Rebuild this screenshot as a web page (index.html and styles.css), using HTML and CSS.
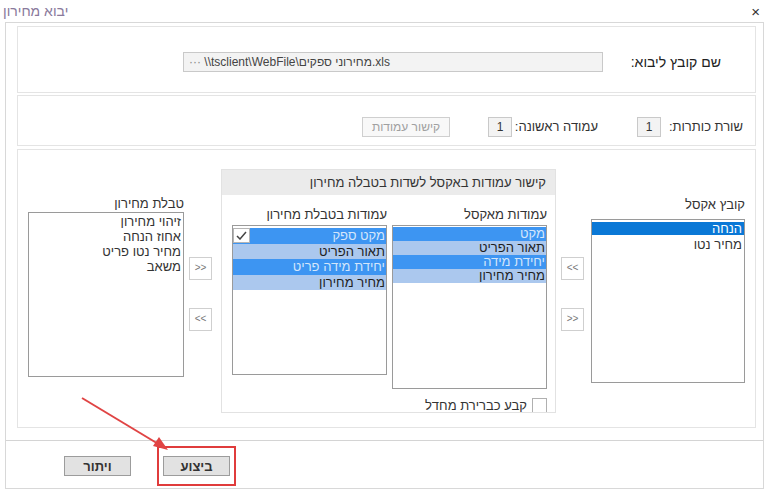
FILE: index.html
```html
<!DOCTYPE html>
<html lang="he" dir="rtl">

<head>
    <meta charset="UTF-8">
    <title>יבוא מחירון</title>
    <link rel="stylesheet" href="styles.css">
</head>

<body>
    <div class="titlebar">
        <span class="title">יבוא מחירון</span>
        <span class="close">×</span>
    </div>

    <div class="dialog">
        <div class="sections">

            <div class="box file-row">
                <div class="file-label">שם קובץ ליבוא:</div>
                <div class="file-input"><span class="dots">···</span> <bdi dir="ltr">\\tsclient\WebFile\מחירוני ספקים.xls</bdi></div>
            </div>

            <div class="box settings-row">
                <div class="lbl lbl-head">שורת כותרות:</div>
                <div class="num">1</div>
                <div class="lbl lbl-col">עמודה ראשונה:</div>
                <div class="num">1</div>
                <button class="link-btn" disabled>קישור עמודות</button>
            </div>

            <div class="box mapping">
                <!-- excel file columns -->
                <div class="col col-excel">
                    <div class="col-title">קובץ אקסל</div>
                    <div class="list list-excel">
                        <div class="item sel">הנחה</div>
                        <div class="item">מחיר נטו</div>
                    </div>
                </div>

                <div class="arrows arrows-right">
                    <div class="arr">&lt;&lt;</div>
                    <div class="arr">&gt;&gt;</div>
                </div>

                <!-- link panel -->
                <div class="panel">
                    <div class="panel-head">קישור עמודות באקסל לשדות בטבלה מחירון</div>
                    <div class="panel-body">
                        <div class="pcol">
                            <div class="pcol-title">עמודות מאקסל</div>
                            <div class="list list-xl">
                                <div class="row on">מקט</div>
                                <div class="row off">תאור הפריט</div>
                                <div class="row on">יחידת מידה</div>
                                <div class="row off">מחיר מחירון</div>
                            </div>
                            <div class="default-row">
                                <span class="chk"></span>
                                <span>קבע כברירת מחדל</span>
                            </div>
                        </div>
                        <div class="pcol">
                            <div class="pcol-title">עמודות בטבלת מחירון</div>
                            <div class="list list-tbl">
                                <div class="row on">מקט ספק
                                    <span class="tick">
                                        <svg width="11" height="9" viewBox="0 0 11 9"><polyline points="1,5 4,8 10,1" fill="none" stroke="#444" stroke-width="1.5"/></svg>
                                    </span>
                                </div>
                                <div class="row off">תאור הפריט</div>
                                <div class="row on">יחידת מידה פריט</div>
                                <div class="row off">מחיר מחירון</div>
                            </div>
                        </div>
                    </div>
                </div>

                <div class="arrows arrows-left">
                    <div class="arr">&gt;&gt;</div>
                    <div class="arr">&lt;&lt;</div>
                </div>

                <div class="col col-price">
                    <div class="col-title">טבלת מחירון</div>
                    <div class="list list-price">
                        <div class="item">זיהוי מחירון</div>
                        <div class="item">אחוז הנחה</div>
                        <div class="item">מחיר נטו פריט</div>
                        <div class="item">משאב</div>
                    </div>
                </div>
            </div>
        </div>

        <div class="footer">
            <button class="btn">ויתור</button>
            <span class="mark"><button class="btn">ביצוע</button></span>
        </div>
    </div>

    <svg class="pointer" width="768" height="491" viewBox="0 0 768 491">
        <line x1="82" y1="398" x2="160" y2="445" stroke="#e04444" stroke-width="2" />
        <polygon points="168,450 153,446 159,437" fill="#e04444" />
    </svg>
</body>

</html>
```

FILE: styles.css
```css
* {
    box-sizing: border-box;
}

body {
    margin: 0;
    width: 768px;
    height: 491px;
    background-color: white;
    font-family: "Liberation Sans", "DejaVu Sans", sans-serif;
    font-size: 13px;
    color: #333;
    position: relative;
    overflow: hidden;
}

.titlebar {
    direction: ltr;
    height: 22px;
    display: flex;
    justify-content: space-between;
    align-items: center;
    padding: 0 8px 0 3px;
}

.title {
    color: #8a7a9c;
    font-size: 14px;
}

.close {
    font-size: 15px;
    color: #333;
}

.dialog {
    margin: 0 4px 0 5px;
    height: 467px;
    border: 1px solid #d8d8d8;
    display: flex;
    flex-direction: column;
}

.sections {
    height: 417px;
    padding: 3px 7px 0 11px;
}

.box {
    border: 1px solid #e4e4e4;
}

/* file row */
.file-row {
    height: 67px;
    display: flex;
    align-items: flex-start;
    padding: 25px 34px 0 0;
}

.file-label {
    width: 118px;
    height: 20px;
    line-height: 20px;
    font-size: 14px;
    color: #222;
}

.file-input {
    width: 420px;
    height: 20px;
    line-height: 18px;
    background-color: #f3f3f3;
    border: 1px solid #c9c9c9;
    direction: ltr;
    text-align: left;
    padding-left: 5px;
    font-size: 12px;
    color: #444;
}

.dots {
    color: #888;
}

/* settings row */
.settings-row {
    margin-top: 2px;
    height: 51px;
    display: flex;
    align-items: flex-start;
    padding: 21px 12px 0 0;
}

.lbl {
    height: 20px;
    line-height: 20px;
    font-size: 13px;
    color: #333;
}

.lbl-head {
    width: 82px;
}

.lbl-col {
    margin-right: 39px;
    width: 86px;
}

.num {
    width: 24px;
    height: 20px;
    line-height: 18px;
    border: 1px solid #c9c9c9;
    background-color: #f3f3f3;
    text-align: center;
    font-size: 12px;
    color: #333;
}

.link-btn {
    margin-right: 38px;
    width: 88px;
    height: 20px;
    padding: 0;
    background-color: #f8f8f8;
    border: 1px solid #cfcfcf;
    color: #a0a0a0;
    font-family: inherit;
    font-size: 12px;
}

/* mapping area */
.mapping {
    margin-top: 3px;
    height: 279px;
    display: flex;
    align-items: flex-start;
    padding: 19px 10px 0 0;
}

.col-title {
    font-size: 13px;
    color: #333;
    height: 16px;
    line-height: 16px;
}

.list {
    border: 1px solid #9a9a9a;
    background-color: white;
    overflow: hidden;
}

.col-excel {
    width: 154px;
    margin-top: 28px;
}

.col-excel .list {
    margin-top: 6px;
    height: 164px;
    padding-top: 2px;
}

.col-price {
    width: 156px;
    margin-top: 27px;
    margin-right: 5px;
}

.col-price .list {
    height: 165px;
    padding-top: 1px;
}

.item {
    height: 15px;
    line-height: 15px;
    padding-right: 2px;
    font-size: 13px;
    color: #333;
}

.item.sel {
    background-color: #0a78d6;
    color: white;
    height: 13px;
    line-height: 13px;
    margin-bottom: 2px;
}

.arrows {
    width: 23px;
    margin-top: 88px;
    display: flex;
    flex-direction: column;
    gap: 28px;
}

.arrows-right {
    margin-right: 7px;
}

.arrows-left {
    margin-right: 9px;
}

.arr {
    width: 23px;
    height: 23px;
    border: 1px solid #cfcfcf;
    background-color: white;
    text-align: center;
    line-height: 20px;
    font-size: 10px;
    color: #777;
    direction: ltr;
}

/* link panel */
.panel {
    margin-right: 5px;
    width: 335px;
    height: 244px;
    border: 1px solid #e2e2e2;
    overflow: hidden;
}

.panel-head {
    height: 25px;
    line-height: 25px;
    background-color: #ebebeb;
    padding-right: 9px;
    font-size: 13px;
    color: #333;
}

.panel-body {
    display: flex;
    gap: 5px;
    padding: 12px 8px 0 0;
}

.pcol {
    width: 155px;
}

.pcol-title {
    height: 18px;
    line-height: 16px;
    font-size: 13px;
    color: #333;
}

.list-xl {
    height: 164px;
    padding-top: 1px;
}

.list-tbl {
    height: 150px;
    padding-top: 2px;
}

.row {
    height: 14px;
    line-height: 14px;
    padding-right: 1px;
    font-size: 13px;
    position: relative;
}

.list-tbl .row {
    height: 15.5px;
    line-height: 15.5px;
}

.row.on {
    background-color: #3d95f2;
    color: #d4e6fb;
}

.row.off {
    background-color: #abc8ee;
    color: #1e1e1e;
}

.tick {
    position: absolute;
    left: 0;
    top: 0;
    width: 17px;
    height: 15px;
    background-color: white;
    border: 1px solid #b5b5b5;
    display: flex;
    align-items: center;
    justify-content: center;
}

.default-row {
    margin-top: 9px;
    display: flex;
    align-items: center;
    gap: 5px;
    font-size: 13px;
    color: #333;
}

.chk {
    width: 15px;
    height: 15px;
    border: 1px solid #b0b0b0;
    background-color: white;
}

/* footer */
.footer {
    flex: 1;
    border-top: 1px solid #d4d4d4;
    direction: ltr;
    display: flex;
    align-items: flex-start;
    padding: 5px 0 0 58px;
}

.btn {
    width: 67px;
    height: 20px;
    padding: 0;
    background-color: #e2e2e2;
    border: 1px solid #9c9c9c;
    font-family: inherit;
    font-size: 13px;
    font-weight: bold;
    color: #333;
}

.footer > .btn {
    margin-top: 10px;
}

.mark {
    margin-left: 26px;
    border: 2px solid #e03c3c;
    padding: 8px 4px 8px 4px;
    display: inline-block;
}

.pointer {
    position: absolute;
    left: 0;
    top: 0;
    pointer-events: none;
}
```
